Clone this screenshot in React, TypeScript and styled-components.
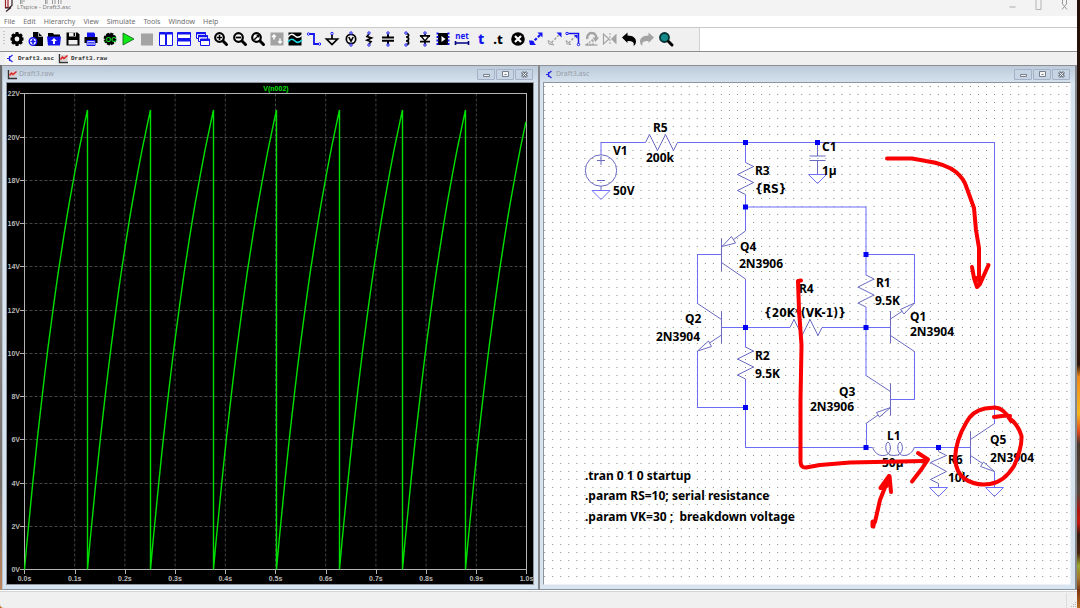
import React from 'react';
import styled, { createGlobalStyle } from 'styled-components';

const GlobalStyle = createGlobalStyle`
  * { box-sizing: border-box; }
  html, body, #root { height: 100%; }
  body {
    margin: 0;
    overflow: hidden;
    font-family: "Noto Sans", "Open Sans", sans-serif;
    background: linear-gradient(
      #241008 0%, #2c1409 60%, #f08a1c 62%, #f5b81e 68%, #e0481c 71%,
      #47362c 73%, #54463c 81%, #b01410 84%, #c2180e 86%, #33180c 88%,
      #4a230f 91%, #9aa82c 93%, #a5782c 95%, #7c3410 97%, #b86820 100%
    );
  }
  button {
    border: 0;
    margin: 0;
    padding: 0;
    background: none;
    font: inherit;
    color: inherit;
  }
`;

const Desktop = styled.div`
  height: 100%;
  padding-right: 3px;
`;

const AppWindow = styled.main`
  height: 100%;
  min-height: 480px;
  display: flex;
  flex-direction: column;
  background: #f0f0f0;
  border-bottom-left-radius: 4px;
`;

const TitleBar = styled.header`
  flex: 0 0 16px;
  display: flex;
  align-items: flex-start;
  padding: 0 8px 0 4px;
  background: #f3f3f3;
  overflow: hidden;
`;

const AppTitle = styled.h1`
  margin: 0 auto 0 3px;
  font-size: 6px;
  line-height: 14px;
  font-weight: 400;
  color: #808080;
  white-space: nowrap;
`;

const Caption = styled.button`
  width: 26px;
  height: 16px;
  display: flex;
  justify-content: center;
  &:last-child { width: 10px; margin-left: 8px; }
`;

const MenuBar = styled.nav`
  flex: 0 0 11px;
  display: flex;
  gap: 8px;
  padding-left: 4px;
  background: #fff;
  font-size: 7px;
  line-height: 10px;
  color: #6e6e6e;
`;

const ToolBar = styled.div`
  flex: 0 0 25px;
  display: flex;
  border-top: 1px solid #cacaca;
  border-bottom: 1px solid #8e8e8e;
  background: #fff;
`;

const ToolStrip = styled.div`
  flex: 0 0 700px;
  display: flex;
  padding: 0 24px 2px 0;
  background: #f0f0f0;
  border-right: 1px solid #d0d0d0;
`;

const Grip = styled.span`
  flex: 0 0 2px;
  margin: 3px 3px;
  background: repeating-linear-gradient(#c8c8c8 0 1px, #f0f0f0 1px 3px);
`;

const ToolButton = styled.button`
  flex: 1 1 0;
  display: flex;
  align-items: center;
  justify-content: center;
  min-width: 0;
`;

const Glyph = styled.svg<{ $width?: number }>`
  flex: none;
  width: ${(p) => p.$width ?? 16}px;
  height: 16px;
  overflow: visible;
`;

const SmallGlyph = styled.svg`
  flex: none;
  width: 9px;
  height: 9px;
  overflow: visible;
`;

const TabBar = styled.div`
  flex: 0 0 13px;
  display: flex;
  gap: 3px;
  padding-left: 5px;
`;

const Tab = styled.button<{ $active?: boolean }>`
  display: flex;
  align-items: center;
  gap: 3px;
  padding: 0 1px;
  font: 700 6px/12px "Liberation Mono", monospace;
  color: #303030;
  background: ${(p) => (p.$active ? '#f7f7f7' : '#f2f2f2')};
`;

const Workspace = styled.div`
  flex: 1 1 0;
  min-height: 0;
  display: grid;
  grid-template-columns: 538fr 537fr;
  padding-left: 2px;
  background: linear-gradient(#6a6a6a, #8d8d8d 40%, #77706c 80%, #c08860);
`;

const Child = styled.section<{ $edge?: boolean }>`
  display: flex;
  flex-direction: column;
  min-width: 0;
  min-height: 0;
  padding: 0 4px 4px 3px;
  border-top: 1px solid #8c8f94;
  border-bottom: 1px solid #8693a3;
  border-right: 2px solid #84878c;
  border-left: ${(p) => (p.$edge ? '1px solid #b9c4d0' : '0')};
  background: #d9e4f1;
`;

const ChildTitle = styled.header`
  flex: 0 0 16px;
  display: flex;
  align-items: center;
  gap: 2px;
  margin: 0 -4px 0 -3px;
  padding: 0 5px 0 5px;
  background: linear-gradient(#bccad9, #d5e1ee);
`;

const ChildName = styled.h2`
  margin: 0 auto 0 0;
  font-size: 7px;
  line-height: 12px;
  font-weight: 400;
  color: #98a0aa;
`;

const ChildButton = styled.button`
  width: 18px;
  height: 11px;
  display: flex;
  align-items: center;
  justify-content: center;
  border: 1px solid #a4b1c6;
  border-radius: 1px;
  background: #c6d4e4;
  & + & { margin-left: -1px; }
`;

const Client = styled.div<{ $dark?: boolean }>`
  flex: 1 1 0;
  min-height: 0;
  border: 1px solid #8e959c;
  border-right-color: ${(p) => (p.$dark ? '#8e959c' : '#eef2f6')};
  border-bottom-color: ${(p) => (p.$dark ? '#8e959c' : '#eef2f6')};
  background: ${(p) => (p.$dark ? '#000' : '#fff')};
`;

const Drawing = styled.svg`
  display: block;
  width: 100%;
  height: 100%;
`;

const PlotText = styled.text`
  font: 700 7px "Liberation Sans", Arial, sans-serif;
  fill: #b8b8b8;
`;

const TraceName = styled(PlotText)`
  fill: #00e000;
`;

const Label = styled.text<{ $expression?: boolean }>`
  font: 700 12px ${(p) => (p.$expression ? '"DejaVu Sans Condensed"' : '"Noto Sans"')}, "Open Sans", sans-serif;
  fill: #000;
  white-space: pre;
`;

const StatusBar = styled.footer`
  flex: 0 0 18px;
  display: flex;
  justify-content: flex-end;
  align-items: flex-end;
  border-top: 1px solid #fff;
  box-shadow: inset 0 1px #d4d4d4;
  border-bottom-left-radius: 4px;
`;

const SizeGrip = styled.div`
  width: 11px;
  height: 15px;
  display: flex;
  align-items: flex-end;
  justify-content: flex-end;
  border-left: 1px solid #dcdcdc;
`;

const BLUE = '#1414f0';
const GREY = '#a3a3a3';

const terminals = (
  <g fill="#fff" stroke={BLUE}>
    <circle cx="8" cy="2" r="1.2" />
    <circle cx="8" cy="14" r="1.2" />
  </g>
);

const lens = (
  <>
    <circle cx="6.5" cy="6.5" r="4.3" fill="#fff" stroke="#000" strokeWidth="2.2" />
    <path d="M10 10L13.5 13.5" stroke="#000" strokeWidth="3" strokeLinecap="round" />
  </>
);

const tools: [string, React.ReactNode][] = [
  ['Settings', <>
    <circle cx="8" cy="8" r="4" fill="none" stroke="#000" strokeWidth="3.6" />
    <path d="M8 1v14M1.5 8h13M3.2 3.2l9.6 9.6M12.8 3.2l-9.6 9.6" stroke="#000" strokeWidth="3" />
    <circle cx="8" cy="8" r="2.4" fill="#f0f0f0" />
  </>],
  ['New schematic', <>
    <path d="M5 1h5l5 5v9H5z" fill="#000" /><path d="M10.5 1.5v4h4" fill="none" stroke="#ccc" strokeWidth=".8" />
    <circle cx="5" cy="10.5" r="3.8" fill="#fff" stroke={BLUE} strokeWidth="1.4" />
    <path d="M5 8v5M2.5 10.5h5" stroke={BLUE} strokeWidth="1.6" />
  </>],
  ['Open', <>
    <path d="M2 2h5l1 1.5h6v4H2z" fill="#000" /><path d="M1 5.5h14l-1 9H2z" fill={BLUE} />
    <path d="M8 7l3 3H9v3H7v-3H5z" fill="#fff" />
  </>],
  ['Save', <>
    <path d="M1.5 1.5h11l2 2v11h-13z" fill="#000" /><path d="M4 1.5h7v4H4zM3.5 9h9v4.5h-9z" fill="#f0f0f0" />
    <path d="M8.5 2h1.6v3H8.5z" fill="#000" />
  </>],
  ['Print', <>
    <path d="M4 1.5h7l1 1v4H4z" fill={BLUE} /><path d="M1.5 6h13v6h-13z" fill="#000" />
    <path d="M4 9.5h8v5H4z" fill="#fff" stroke={BLUE} /><path d="M5 11.3h6M5 13h6" stroke={BLUE} />
  </>],
  ['Control panel', <>
    <circle cx="8" cy="8" r="5.4" fill="#000" stroke="#000" strokeWidth="2" strokeDasharray="3 1.2" />
    <text x="8" y="10.5" textAnchor="middle" fontFamily="Liberation Sans, sans-serif" fontWeight="700" fontSize="7" fill="#10e020">.OC</text>
  </>],
  ['Run', <path d="M3 2l11 6-11 6z" fill="#10e818" stroke="#0a5a10" strokeWidth=".8" />],
  ['Halt', <path d="M2 2.5h12v12H2z" fill={GREY} />],
  ['Tile vertically', <>
    <path d="M1.5 1.5h6v13h-6zM8.5 1.5h6v13h-6z" fill="#fff" stroke={BLUE} />
    <path d="M1.5 2.5h6M8.5 2.5h6" stroke={BLUE} strokeWidth="2" />
  </>],
  ['Tile horizontally', <>
    <path d="M1.5 1.5h13v6h-13zM1.5 8.5h13v6h-13z" fill="#fff" stroke={BLUE} />
    <path d="M1.5 2.5h13M1.5 9.5h13" stroke={BLUE} strokeWidth="2" />
  </>],
  ['Cascade', <>
    <g fill="#fff" stroke={BLUE}><path d="M1.5 1.5h9v6h-9z" /><path d="M3.5 4.5h9v6h-9z" /><path d="M5.5 8h9v6.5h-9z" /></g>
    <path d="M1.5 2.3h9M3.5 5.3h9M5.5 9h9" stroke={BLUE} strokeWidth="2" />
  </>],
  ['Zoom in', <>{lens}<path d="M6.5 4v5M4 6.5h5" stroke="#000" strokeWidth="1.6" /></>],
  ['Zoom out', <>{lens}<path d="M4 6.5h5" stroke="#000" strokeWidth="1.8" /></>],
  ['Zoom to fit', <>{lens}<path d="M4.2 8.8L8.8 4.2M6.6 4.4h2.2v2.2" fill="none" stroke="#000" strokeWidth="1.3" /></>],
  ['Autorange', <>
    <path d="M1.5 1.5h13v13h-13z" fill={GREY} />
    <path d="M5 8.5V4M3.2 6L5 4l1.8 2M11 7.5V12M9.2 10.2L11 12l1.8-1.8" fill="none" stroke="#fff" strokeWidth="1.5" />
  </>],
  ['Pick visible traces', <>
    <path d="M1.5 1.5h13v13h-13z" fill="#000" />
    <path d="M1 6c3-4 5-3 7-1s4 2 7-1" fill="none" stroke="#fff" strokeWidth="1.3" />
    <path d="M1 11c3-4 5-3 7-1s4 2 7-1" fill="none" stroke="#20dce8" strokeWidth="1.6" />
  </>],
  ['Wire', <>
    <path d="M3 3h5v10h5" fill="none" stroke={BLUE} strokeWidth="1.8" />
    <g fill="#fff" stroke={BLUE}><circle cx="2.5" cy="3" r="1.2" /><circle cx="13.5" cy="13" r="1.2" /></g>
  </>],
  ['Ground', <>
    <path d="M8 4v4M2.5 8h11L8 13.5z" fill="none" stroke="#000" strokeWidth="1.7" />
    <circle cx="8" cy="2.5" r="1.2" fill="#fff" stroke={BLUE} />
  </>],
  ['Voltage source', <>
    <circle cx="8" cy="8" r="4.7" fill="none" stroke="#000" strokeWidth="1.7" />
    <path d="M5.8 6L8 10.2 10.2 6" fill="none" stroke="#000" strokeWidth="1.6" />{terminals}
  </>],
  ['Resistor', <><path d="M8 3L6 5.5l4.5 1.5L6 9.2l4 1.5L8 13" fill="none" stroke="#000" strokeWidth="1.7" />{terminals}</>],
  ['Capacitor', <><path d="M8 3v3M8 10v3M2 6.5h12M2 9.7h12" stroke="#000" strokeWidth="2" />{terminals}</>],
  ['Inductor', <><path d="M8 2.5c3.5 0 3.5 3.5 0 3.5 3.5 0 3.5 4 0 4 3.5 0 3.5 3.5 0 3.5" fill="none" stroke="#000" strokeWidth="1.7" />{terminals}</>],
  ['Diode', <><path d="M8 3v10M3 5h10M3 10.7h10" stroke="#000" strokeWidth="1.8" /><path d="M4 5l4 5 4-5z" fill="#fff" stroke="#000" strokeWidth="1.4" />{terminals}</>],
  ['Component', <>
    <path d="M3 2h10v12H3z" fill="#000" /><path d="M6.5 5l4 3-4 3z" fill="#fff" />
    <path d="M2.5 1.5v13M13.5 1.5v13" stroke={BLUE} strokeWidth="2" strokeDasharray="2 1.5" />
  </>],
  ['Net label', <>
    <text x="8" y="8" textAnchor="middle" fontFamily="Noto Sans, sans-serif" fontWeight="700" fontSize="8" fill={BLUE}>net</text>
    <path d="M2 12h12M1.5 10v4M14.5 10v4" stroke="#000080" strokeWidth="1.6" />
  </>],
  ['Text', <text x="8" y="13" textAnchor="middle" fontFamily="Noto Sans, sans-serif" fontWeight="800" fontSize="14" fill={BLUE}>t</text>],
  ['SPICE directive', <text x="7" y="13" textAnchor="middle" fontFamily="Noto Sans, sans-serif" fontWeight="800" fontSize="13">.t</text>],
  ['Delete', <><circle cx="8" cy="8" r="6.8" /><path d="M5 5l6 6M11 5l-6 6" stroke="#fff" strokeWidth="2.2" /></>],
  ['Move', <>
    <path d="M9.5 1.5h5v5z" fill={BLUE} /><path d="M12 4L3 13" stroke={BLUE} strokeWidth="2.2" strokeDasharray="3 1.5" />
    <path d="M1 9.5h3L8 14H2z" fill={BLUE} />
  </>],
  ['Copy', <>
    <path d="M9.5 1.5h5v5z" fill={BLUE} /><path d="M12 4L3 13" stroke={GREY} strokeWidth="1.5" strokeDasharray="2.5 1.5" />
    <path d="M1 9.5l2 1 4 3.5-5-1z" fill="none" stroke={GREY} />
  </>],
  ['Drag', <>
    <path d="M2 2.5h11.5V13" fill="none" stroke={BLUE} strokeWidth="1.5" />
    <g fill="#fff" stroke={BLUE}><circle cx="2" cy="2.5" r="1.2" /><circle cx="13.5" cy="13.5" r="1.2" /></g>
    <path d="M11 4.5L3.5 12" stroke={GREY} strokeWidth="1.5" strokeDasharray="2.5 1.5" />
    <path d="M9 4h3.5v4z" fill={BLUE} /><path d="M1 9.5l5 4-4-.5z" fill="none" stroke={GREY} />
  </>],
  ['Rotate', <>
    <path d="M3.5 8a4.5 4.5 0 1 1 8.5 0" fill="none" stroke={GREY} strokeWidth="2.4" />
    <path d="M8.5 6.5H15L11.5 11z" fill={GREY} />
    <path d="M2.5 13.5L9 8.5v5z" fill="none" stroke={GREY} strokeWidth="1.3" strokeDasharray="2 1" />
    <path d="M1.5 14h12" stroke={GREY} strokeWidth="1.3" />
  </>],
  ['Mirror', <>
    <path d="M1.5 3v10L7 8z" fill="none" stroke={GREY} strokeWidth="1.2" /><path d="M14.5 2.5v11L9 8z" fill={GREY} />
    <path d="M8 2v12" stroke={GREY} strokeDasharray="2 1" />
  </>],
  ['Undo', <path d="M1 6.5L6.5 1.5V4.5c6 0 8.5 3 8.5 6 0 2-1 3.5-2.5 4.5 1-4-1-5-6-5v2z" />],
  ['Redo', <path d="M15 6.5L9.5 1.5V4.5c-6 0-8.5 3-8.5 6 0 2 1 3.5 2.5 4.5-1-4 1-5 6-5v2z" fill={GREY} />],
  ['Search', <>
    <circle cx="6.5" cy="6.5" r="4.5" fill="#128a8a" stroke="#003030" strokeWidth="1.8" />
    <path d="M10.5 10.5L14 14" stroke="#000" strokeWidth="3" strokeLinecap="round" />
  </>],
];

const SchematicIcon = () => (
  <SmallGlyph viewBox="0 0 9 9">
    <path d="M1 4.5h2.5M3.5 2v5M3.5 3.5L6.5 1M3.5 5.5L6.5 8" fill="none" stroke="#2222e8" strokeWidth="1.2" />
  </SmallGlyph>
);

const WaveIcon = () => (
  <SmallGlyph viewBox="0 0 9 9">
    <path d="M.5 0v8.5H9" fill="none" stroke="#333" strokeWidth="1.4" />
    <path d="M1.5 1h7v6h-7z" fill="#d8d0d0" />
    <path d="M1.5 5.5l2-2.5 1.5 1.5L8.5 1.5" fill="none" stroke="#e02020" strokeWidth="1.5" />
  </SmallGlyph>
);

const X0 = 24.5;
const X1 = 526.5;
const Y0 = 569.5;
const Y1 = 93.5;
const px = (t: number) => X0 + t * (X1 - X0);
const py = (v: number) => Y0 - (v / 22) * (Y0 - Y1);
const crisp = (n: number) => Math.floor(n + 0.3) + 0.5;

const PERIOD = 0.1255;
const trace = (() => {
  const pts: string[] = [];
  for (let k = 0; k < 8; k++) {
    for (let s = 0; s <= 24; s++) {
      const dt = (PERIOD * s) / 24;
      const t = k * PERIOD + dt;
      if (t > 1) break;
      pts.push(`${px(t).toFixed(1)},${py(35.4 * (1 - Math.exp(-dt / 0.137))).toFixed(1)}`);
    }
    if ((k + 1) * PERIOD < 1) pts.push(`${px((k + 1) * PERIOD).toFixed(1)},${Y0}`);
  }
  return pts.join(' ');
})();

const Plot = () => (
  <Drawing viewBox="7 83 526 501" role="img" aria-label="Waveform of V(n002)">
    <g stroke="#444" strokeDasharray="3 2">
      {Array.from({ length: 9 }, (_, i) => (
        <line key={i} x1={px((i + 1) / 10)} x2={px((i + 1) / 10)} y1={Y1} y2={Y0} />
      ))}
      {Array.from({ length: 10 }, (_, i) => (
        <line key={i} x1={X0} x2={X1} y1={crisp(py(2 * i + 2))} y2={crisp(py(2 * i + 2))} />
      ))}
    </g>
    <rect x={X0} y={Y1} width={X1 - X0} height={Y0 - Y1} fill="none" stroke="#b4b4b4" />
    {Array.from({ length: 12 }, (_, i) => (
      <g key={i}>
        <line x1="20" x2={X0} y1={crisp(py(2 * i))} y2={crisp(py(2 * i))} stroke="#b4b4b4" />
        <PlotText x="20" y={Math.floor(py(2 * i) + 0.3) + 3} textAnchor="end">{2 * i}V</PlotText>
      </g>
    ))}
    {Array.from({ length: 11 }, (_, i) => (
      <g key={i}>
        <line x1={crisp(px(i / 10))} x2={crisp(px(i / 10))} y1={Y0} y2="574" stroke="#b4b4b4" />
        <PlotText x={px(i / 10)} y="581" textAnchor="middle">{(i / 10).toFixed(1)}s</PlotText>
      </g>
    ))}
    <polyline points={trace} fill="none" stroke="#00e000" strokeWidth="1.4" />
    <TraceName x="276" y="91" textAnchor="middle">V(n002)</TraceName>
  </Drawing>
);

const labels: [number, number, string][] = [
  [653, 132, 'R5'], [646, 162, '200k'], [613, 155, 'V1'], [613, 195, '50V'],
  [755, 175, 'R3'], [755, 193, '{RS}'], [822, 151, 'C1'], [822, 175, '1µ'],
  [740, 251, 'Q4'], [739, 268, '2N3906'], [799, 293, 'R4'], [764, 317, '{20K*(VK-1)}'],
  [685, 323, 'Q2'], [656, 341, '2N3904'], [755, 360, 'R2'], [755, 378, '9.5K'],
  [876, 287, 'R1'], [875, 305, '9.5K'], [910, 321, 'Q1'], [910, 336, '2N3904'],
  [839, 396, 'Q3'], [810, 411, '2N3906'], [887, 440, 'L1'], [882, 467, '50µ'],
  [948, 464, 'R6'], [948, 482, '10k'], [990, 444, 'Q5'], [990, 462, '2N3904'],
  [585, 480, '.tran 0 1 0 startup'],
  [585, 500, '.param RS=10; serial resistance'],
  [585, 521, '.param VK=30 ;  breakdown voltage'],
];

const nodes = [
  [745.5, 142.5], [817.5, 142.5], [745.5, 207], [866, 254.5], [745.5, 327.5],
  [866, 327.5], [745.5, 407.5], [866, 447.5], [938.5, 447.5],
];

const PITCH = 8.033;

const VResistor = ({ x, y }: { x: number; y: number }) => (
  <path d={`M${x} ${y}l8 4-16 8 16 8-16 8 8 4`} />
);
const HResistor = ({ x, y }: { x: number; y: number }) => (
  <path d={`M${x} ${y}l4-8 8 16 8-16 8 16 4-8`} />
);
const Earth = ({ x, y }: { x: number; y: number }) => (
  <path d={`M${x - 9} ${y}h18l-9 9z`} stroke="#7070ff" />
);

const Schematic = () => (
  <Drawing viewBox="544 83 526 501" role="img" aria-label="Circuit schematic">
    <g stroke="#868686" strokeDasharray={`1 ${PITCH - 1}`}>
      {Array.from({ length: 63 }, (_, i) => (
        <line key={i} x1="544.2" x2="1070" y1={crisp(86 + i * PITCH)} y2={crisp(86 + i * PITCH)} />
      ))}
    </g>
    <path
      fill="none"
      stroke="#6c6cfa"
      d="M601 155V142.5H645.5M677.5 142.5H994.5V423.5M745.5 142.5V162.5M745.5 194.5V231
         M745.5 207H866V275.5M866 254.5H914.5V303M721.5 254.5H697.5V303.5M745.5 279V347.5
         M745.5 379V447.5H872.5M697.5 351V407.5H745.5M721.5 327.5H790M822 327.5H890.5
         M866 307V375.5M914.5 351V399.5H890.5M866.5 423.5V447.5M914.5 447.5H970.5
         M994.5 471.5V487.5"
    />
    <g fill="none" stroke="#6a6ac4">
      <circle cx="601" cy="170.5" r="15.7" />
      <path d="M597 160.5h8M601 156v9M597 180.5h8M601 186v4M817.5 142.5V156M809.5 156h16M809.5 160.5h16M817.5 160.5v14" />
      <HResistor x={645.5} y={142.5} />
      <HResistor x={790} y={327.5} />
      <VResistor x={745.5} y={162.5} />
      <VResistor x={745.5} y={347} />
      <VResistor x={866} y={275} />
      <path d="M938.5 447.5v4l8 4-16 7 16 9-16 8 8 4v4" />
      <path d="M721.5 239v32M721.5 262.5l24 16.5M745.5 231l-12 8.5M722 246.5l9.5-10 4 6.5z" />
      <path d="M721.5 311v32M721.5 319.5l-24-16M721.5 335l-12 8M697.5 351l11-10 3 5.5z" />
      <path d="M890.5 311v32M890.5 335.5l24 16M890.5 319l12-8M914.5 303l-14 6.5 3.5 4.5z" />
      <path d="M890.5 383.5v32M866 375.5l24.5 16M866 423.5l12-8.5M890.5 407.5l-14 5 3 4.5z" />
      <path d="M970.5 431.5v32M970.5 439.5l24-16M970.5 455.5l12 8M994.5 471.5l-11-9.5-3 4.5z" />
      <path
        d="M872.5 447.5Q876 455.5 882 455.5H884Q890 455 890.5 448 890 442 888 442 885.5 443 885.8 449
           887 455.5 894 455.5 902 455.5 902.5 448 902 442 900 442 897.5 443 897.8 449 899 455.5 904 455.5
           911 455.5 914.5 447.5"
      />
      <Earth x={601} y={190.5} />
      <Earth x={817.5} y={174.5} />
      <Earth x={938.5} y={487.5} />
      <Earth x={994.5} y={487.5} />
    </g>
    {nodes.map(([x, y]) => (
      <rect key={`${x}-${y}`} x={x - 2.5} y={y - 2.5} width="5" height="5" fill="#0000f5" />
    ))}
    {labels.map(([x, y, t]) => (
      <Label key={`${x}-${y}`} x={x} y={y} $expression={t.startsWith('{')}>{t}</Label>
    ))}
    <g fill="none" stroke="#fa0000" strokeWidth="4" strokeLinecap="round" strokeLinejoin="round">
      <path d="M887 158.5H912L926 161Q946 164 956 172 964 179 966 186L974 208 976 230 979 248V281" />
      <path d="M972 267l2 11 3 9 3-3 8.5-19M974 278h8" />
      <path d="M801 280.5l-3 .5 1 29 2.5 35-1 55v62Q801 468 806 467.5L820 465 850 462.5 924 461" />
      <path d="M918 453l10 6.5-6 9-10 13" />
      <path d="M873 525l2-3 5-22 9.5-24 1.5 16M889 476l-8.5 12 6-2" />
      <path d="M873 522v4" strokeWidth="5" />
      <path d="M994 417l12-1.5 4 .5M1011 421Q1004 408 995 407.5L985 408.5Q972 411 966 423 956 440 955 458 956 473 965 479 975 486 990 484 1004 482 1014 466 1022 448 1021.5 436 1018 424 1009 418" />
    </g>
  </Drawing>
);

const ChildControls = () => (
  <>
    <ChildButton aria-label="Minimize">
      <SmallGlyph viewBox="0 0 9 9"><path d="M1.5 4.5h6v2h-6z" fill="#f4f4f4" stroke="#777f8c" /></SmallGlyph>
    </ChildButton>
    <ChildButton aria-label="Maximize">
      <SmallGlyph viewBox="0 0 9 9"><path d="M1.5 1.5h6v5h-6z" fill="#f4f4f4" stroke="#777f8c" /><path d="M3.5 4.5h2" stroke="#777f8c" /></SmallGlyph>
    </ChildButton>
    <ChildButton aria-label="Close">
      <SmallGlyph viewBox="0 0 9 9">
        <path d="M2 2l5 5M7 2L2 7" stroke="#6e7683" strokeWidth="3" />
        <path d="M2.5 2.5l4 4M6.5 2.5l-4 4" stroke="#f4f4f4" />
      </SmallGlyph>
    </ChildButton>
  </>
);

export default function App() {
  return (
    <Desktop>
      <GlobalStyle />
      <AppWindow>
        <TitleBar>
          <Glyph $width={10} viewBox="0 0 10 16">
            <path d="M1.5 0v7.5H4V0" fill="none" stroke="#a02028" strokeWidth="1.2" />
            <path d="M1 8h4L8 5.5V0M2 11.5l5-4" fill="none" stroke="#302020" strokeWidth="1.2" />
            <path d="M16.5 0v4M18 0v4M20 0v2M41.5 0v4M43 0v4M48.5 0v4M51 0v4M54.5 0v4M57 0v4" stroke="#999" />
          </Glyph>
          <AppTitle>LTspice - Draft3.asc</AppTitle>
          <Caption aria-label="Minimize"><SmallGlyph viewBox="0 0 9 9"><path d="M1.5 7h6" stroke="#aaa" /></SmallGlyph></Caption>
          <Caption aria-label="Maximize"><SmallGlyph viewBox="0 0 9 9"><path d="M2 0v9.5h5V0" fill="none" stroke="#b4b4b4" /></SmallGlyph></Caption>
          <Caption aria-label="Close"><SmallGlyph viewBox="0 0 9 9"><path d="M2.5 0v4L7 9.5M6.5 0v4L2 9.5" fill="none" stroke="#999" /></SmallGlyph></Caption>
        </TitleBar>
        <MenuBar>
          {['File', 'Edit', 'Hierarchy', 'View', 'Simulate', 'Tools', 'Window', 'Help'].map((m) => (
            <button key={m}>{m}</button>
          ))}
        </MenuBar>
        <ToolBar>
          <ToolStrip role="toolbar">
            <Grip />
            {tools.map(([name, art]) => (
              <ToolButton key={name} aria-label={name}>
                <Glyph viewBox="0 0 16 16">{art}</Glyph>
              </ToolButton>
            ))}
          </ToolStrip>
        </ToolBar>
        <TabBar>
          <Tab $active><SchematicIcon />Draft3.asc</Tab>
          <Tab><WaveIcon />Draft3.raw</Tab>
        </TabBar>
        <Workspace>
          <Child $edge>
            <ChildTitle><WaveIcon /><ChildName>Draft3.raw</ChildName><ChildControls /></ChildTitle>
            <Client $dark><Plot /></Client>
          </Child>
          <Child>
            <ChildTitle><SchematicIcon /><ChildName>Draft3.asc</ChildName><ChildControls /></ChildTitle>
            <Client><Schematic /></Client>
          </Child>
        </Workspace>
        <StatusBar>
          <SizeGrip>
            <svg width="7" height="7" viewBox="0 0 7 7">
              <path d="M5 1h1v1H5zM5 3h1v1H5zM5 5h1v1H5zM3 3h1v1H3zM3 5h1v1H3zM1 5h1v1H1z" fill="#b4b4b4" />
            </svg>
          </SizeGrip>
        </StatusBar>
      </AppWindow>
    </Desktop>
  );
}
